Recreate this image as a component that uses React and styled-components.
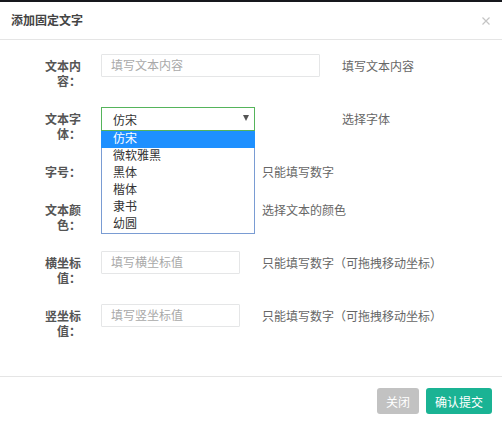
import styled, { createGlobalStyle } from "styled-components";

const GlobalStyle = createGlobalStyle`
  html, body {
    margin: 0;
    padding: 0;
    background: #16181d;
  }
  body {
    font-family: "Liberation Sans", "Noto Sans CJK SC", sans-serif;
    font-size: 12px;
    color: #676a6c;
  }
  * { box-sizing: border-box; }
`;

// ****** Modal ******
const Modal = styled.div`
  margin-top: 2px;
  width: 502px;
  height: 422px;
  background: #fff;
  display: flex;
  flex-direction: column;
`;

const Header = styled.div`
  height: 38px;
  padding: 0 11px;
  border-bottom: 1px solid #e5e5e5;
  display: flex;
  align-items: center;
  justify-content: space-between;
`;

const Title = styled.h4`
  margin: 0;
  font-size: 12px;
  font-weight: bold;
  color: #444;
  line-height: 16px;
`;

const Close = styled.span`
  width: 8px;
  height: 8px;
  margin-right: 1px;
  display: flex;
  color: #c4c4c4;
`;

// ****** Body ******
const Body = styled.div`
  flex: 1;
  padding: 14px 0 0 44px;
`;

const Row = styled.div`
  position: relative;
  display: flex;
  align-items: flex-start;
  margin-bottom: 15px;
`;

const Label = styled.label`
  width: 37px;
  padding: 6px 0 2px;
  line-height: 15px;
  font-weight: bold;
  color: #555;
  text-align: right;
  margin-right: 20px;
`;

const Field = styled.div`
  position: relative;
  width: ${(p) => p.$width}px;
  flex-shrink: 0;
`;

const Input = styled.input`
  display: block;
  width: 100%;
  height: 23px;
  padding: 0 9px;
  border: 1px solid #e5e6e7;
  border-radius: 1px;
  font-family: inherit;
  font-size: 12px;
  color: #333;
  outline: none;
  &::placeholder { color: #a9a9a9; }
`;

const SelectBox = styled.div`
  width: 154px;
  height: 24px;
  padding: 0 11px;
  border: 1px solid #55b45b;
  display: flex;
  align-items: center;
  justify-content: space-between;
  color: #333;
`;

const Arrow = styled.span`
  width: 0;
  height: 0;
  border-left: 3.5px solid transparent;
  border-right: 3.5px solid transparent;
  border-top: 6px solid #555;
  margin-right: -6px;
  margin-top: -3px;
`;

const Menu = styled.ul`
  position: absolute;
  left: 0;
  top: 24px;
  z-index: 2;
  width: 154px;
  margin: 0;
  padding: 0;
  list-style: none;
  background: #fff;
  border: 1px solid #7a9cd3;
  border-top: none;
`;

const Option = styled.li`
  height: 17px;
  line-height: 17px;
  padding-left: 11px;
  margin: 0 -1px;
  padding-left: 12px;
  color: ${(p) => (p.$active ? "#fff" : "#333")};
  background: ${(p) => (p.$active ? "#1e90ff" : "transparent")};
`;

const Help = styled.span`
  margin-left: 22px;
  padding-top: 6px;
  line-height: 15px;
  color: #666;
  white-space: nowrap;
`;

// ****** Footer ******
const Footer = styled.div`
  border-top: 1px solid #e5e5e5;
  padding: 11px 10px 10px;
  display: flex;
  justify-content: flex-end;
  gap: 7px;
`;

const Button = styled.button`
  height: 26px;
  padding: 0 9px;
  border: none;
  border-radius: 3px;
  font-family: inherit;
  font-size: 12px;
  color: #fff;
  background: ${(p) => (p.$primary ? "#1ab394" : "#c2c2c2")};
`;

const fonts = ["仿宋", "微软雅黑", "黑体", "楷体", "隶书", "幼圆"];

const App = () => {
  return (
    <>
      <GlobalStyle />
      <Modal>
        <Header>
          <Title>添加固定文字</Title>
          <Close>
            <svg width="8" height="8" viewBox="0 0 8 8">
              <path d="M0.5 0.5L7.5 7.5M7.5 0.5L0.5 7.5" stroke="currentColor" strokeWidth="1.2" />
            </svg>
          </Close>
        </Header>

        <Body>
          <Row>
            <Label>文本内容：</Label>
            <Field $width={219}>
              <Input placeholder="填写文本内容" />
            </Field>
            <Help>填写文本内容</Help>
          </Row>

          <Row>
            <Label>文本字体：</Label>
            <Field $width={219}>
              <SelectBox>
                仿宋
                <Arrow />
              </SelectBox>
              <Menu>
                {fonts.map((f, i) => (
                  <Option key={f} $active={i === 0}>
                    {f}
                  </Option>
                ))}
              </Menu>
            </Field>
            <Help>选择字体</Help>
          </Row>

          <Row>
            <Label>字号：</Label>
            <Field $width={139}>
              <Input placeholder="填写字号" />
            </Field>
            <Help>只能填写数字</Help>
          </Row>

          <Row>
            <Label>文本颜色：</Label>
            <Field $width={139}>
              <Input />
            </Field>
            <Help>选择文本的颜色</Help>
          </Row>

          <Row>
            <Label>横坐标值：</Label>
            <Field $width={139}>
              <Input placeholder="填写横坐标值" />
            </Field>
            <Help>只能填写数字（可拖拽移动坐标）</Help>
          </Row>

          <Row>
            <Label>竖坐标值：</Label>
            <Field $width={139}>
              <Input placeholder="填写竖坐标值" />
            </Field>
            <Help>只能填写数字（可拖拽移动坐标）</Help>
          </Row>
        </Body>

        <Footer>
          <Button>关闭</Button>
          <Button $primary>确认提交</Button>
        </Footer>
      </Modal>
    </>
  );
};

export default App;
